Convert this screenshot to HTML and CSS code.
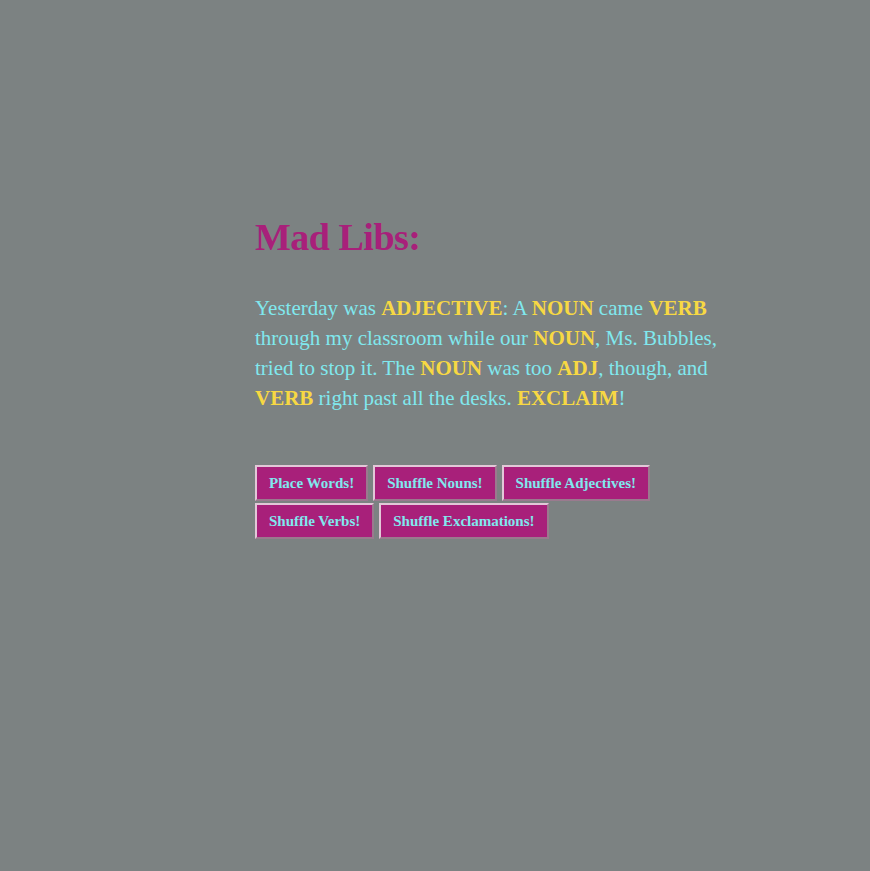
FILE: index.html
```html
<!DOCTYPE html>
<html lang="en">
<head>
<meta charset="utf-8">
<title>Mad Libs</title>
<link rel="stylesheet" href="styles.css">
</head>
<body>
<main class="page">
  <h1 class="title">Mad Libs:</h1>
  <p class="story">Yesterday was <b class="blank">ADJECTIVE</b>: A <b class="blank">NOUN</b> came <b class="blank">VERB</b> through my classroom while our <b class="blank">NOUN</b>, Ms. Bubbles, tried to stop it. The <b class="blank">NOUN</b> was too <b class="blank">ADJ</b>, though, and <b class="blank">VERB</b> right past all the desks. <b class="blank">EXCLAIM</b>!</p>
  <div class="actions">
    <button class="btn">Place Words!</button>
    <button class="btn">Shuffle Nouns!</button>
    <button class="btn">Shuffle Adjectives!</button>
    <button class="btn">Shuffle Verbs!</button>
    <button class="btn">Shuffle Exclamations!</button>
  </div>
</main>
</body>
</html>
```
FILE: styles.css
```css
html, body {
  margin: 0;
  padding: 0;
  background: #7c8282;
  min-height: 100%;
}
body {
  font-family: "Liberation Serif", "DejaVu Serif", serif;
}
.page {
  width: 480px;
  margin-left: 255px;
  padding-top: 213px;
}
.title {
  margin: 0;
  font-size: 38px;
  line-height: 48px;
  letter-spacing: -0.5px;
  font-weight: bold;
  color: #a8207a;
}
.story {
  margin: 32px 0 0;
  font-size: 21px;
  line-height: 30px;
  color: #80e8ee;
}
.blank {
  color: #f7d843;
  font-weight: bold;
}
.actions {
  margin-top: 52px;
  display: flex;
  flex-wrap: wrap;
  column-gap: 5px;
  row-gap: 2px;
}
.btn {
  font-family: "Liberation Serif", "DejaVu Serif", serif;
  font-size: 15px;
  font-weight: bold;
  line-height: 16px;
  color: #80e8ee;
  background: #a8207a;
  padding: 8px 12px;
  border: 2px solid;
  border-color: #e2c8d8 #9a7a8e #9a7a8e #e2c8d8;
  cursor: pointer;
}
```
